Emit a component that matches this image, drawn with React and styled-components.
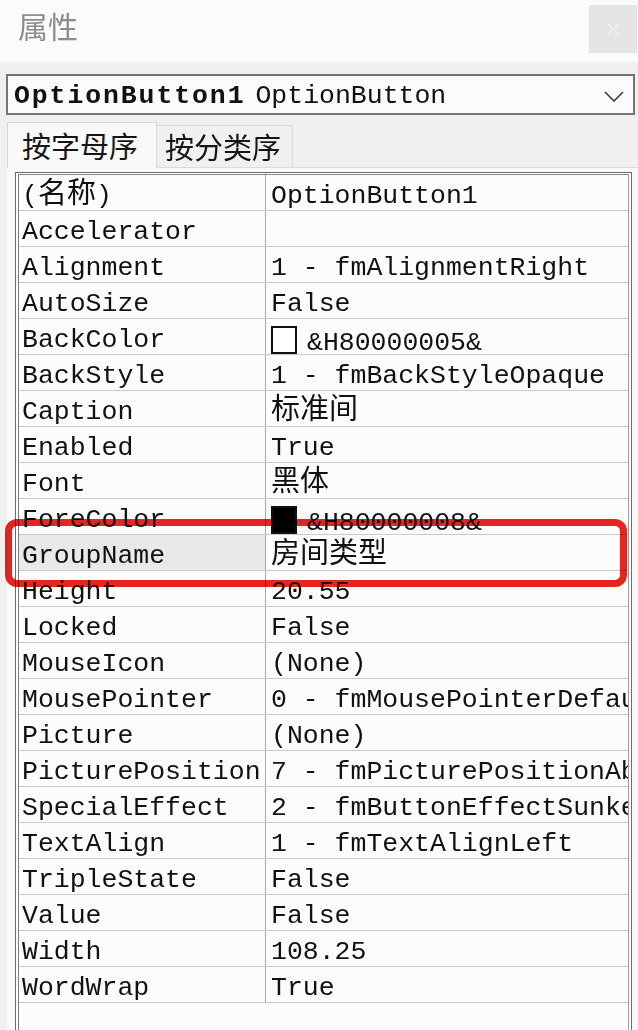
import React from "react";
import styled, { createGlobalStyle } from "styled-components";

const rows = [
  { name: "(名称)", value: "OptionButton1" },
  { name: "Accelerator", value: "" },
  { name: "Alignment", value: "1 - fmAlignmentRight" },
  { name: "AutoSize", value: "False" },
  { name: "BackColor", value: "&H80000005&", swatch: "#fff" },
  { name: "BackStyle", value: "1 - fmBackStyleOpaque" },
  { name: "Caption", value: "标准间", cjk: true },
  { name: "Enabled", value: "True" },
  { name: "Font", value: "黑体", cjk: true },
  { name: "ForeColor", value: "&H80000008&", swatch: "#000" },
  { name: "GroupName", value: "房间类型", cjk: true, selected: true },
  { name: "Height", value: "20.55" },
  { name: "Locked", value: "False" },
  { name: "MouseIcon", value: "(None)" },
  { name: "MousePointer", value: "0 - fmMousePointerDefault" },
  { name: "Picture", value: "(None)" },
  { name: "PicturePosition", value: "7 - fmPicturePositionAboveCenter" },
  { name: "SpecialEffect", value: "2 - fmButtonEffectSunken" },
  { name: "TextAlign", value: "1 - fmTextAlignLeft" },
  { name: "TripleState", value: "False" },
  { name: "Value", value: "False" },
  { name: "Width", value: "108.25" },
  { name: "WordWrap", value: "True" },
];

const App = () => {
  return (
    <Panel>
      <GlobalStyle />
      <TitleBar>
        <Title>属性</Title>
        <CloseButton>×</CloseButton>
      </TitleBar>
      <Body>
        <Dropdown>
          <ObjectName>OptionButton1</ObjectName>
          <ObjectType>OptionButton</ObjectType>
          <Chevron width="20" height="11" viewBox="0 0 20 11">
            <polyline points="1,1 10,10 19,1" fill="none" stroke="#3a3a3a" strokeWidth="1.6" />
          </Chevron>
        </Dropdown>
        <Tabs>
          <Tab $active>按字母序</Tab>
          <Tab>按分类序</Tab>
        </Tabs>
        <TabPage>
          <Frame>
            <Grid>
              {rows.map((row) => (
                <Row key={row.name}>
                  <NameCell $selected={row.selected}>
                    {row.name === "(名称)" ? (
                      <>
                        (<Cjk>名称</Cjk>)
                      </>
                    ) : (
                      row.name
                    )}
                  </NameCell>
                  <ValueCell>
                    {row.swatch && <Swatch $color={row.swatch} />}
                    {row.cjk ? <Cjk>{row.value}</Cjk> : row.value}
                  </ValueCell>
                </Row>
              ))}
            </Grid>
          </Frame>
        </TabPage>
      </Body>
      <Highlight />
    </Panel>
  );
};

export default App;

const GlobalStyle = createGlobalStyle`
  html, body {
    margin: 0;
    background: #f0f0f0;
  }
  body {
    font-family: "Liberation Mono", "Noto Sans CJK SC", monospace;
    color: #111;
  }
`;

const Panel = styled.div`
  position: relative;
  width: 638px;
  height: 1030px;
  overflow: hidden;
  background: #f0f0f0;
  display: flex;
  flex-direction: column;
`;

const TitleBar = styled.div`
  height: 62px;
  flex-shrink: 0;
  background: #fafbfd;
  display: flex;
  justify-content: space-between;
  align-items: flex-start;
`;

const Title = styled.div`
  padding: 10px 0 0 18px;
  font-family: "Noto Sans CJK SC", sans-serif;
  font-size: 30px;
  line-height: 30px;
  color: #8c8c8c;
`;

const CloseButton = styled.div`
  width: 48px;
  height: 48px;
  margin-top: 5px;
  margin-right: 1px;
  background: #e4e4e4;
  color: #ededed;
  font-family: "Liberation Sans", sans-serif;
  font-size: 30px;
  display: grid;
  place-content: center;
`;

const Body = styled.div`
  padding: 12px 3px 0 6px;
  display: flex;
  flex-direction: column;
`;

const Dropdown = styled.div`
  height: 41px;
  box-sizing: border-box;
  border: 2px solid #747474;
  background: #fbfbfd;
  display: flex;
  align-items: center;
  padding: 3px 0 0 6px;
  font-size: 26.5px;
  line-height: 30px;
`;

const ObjectName = styled.span`
  font-weight: bold;
  letter-spacing: 1.9px;
`;

const ObjectType = styled.span`
  margin-left: 10px;
`;

const Chevron = styled.svg`
  margin-left: auto;
  margin-right: 9px;
`;

const Tabs = styled.div`
  display: flex;
  align-items: flex-end;
  margin: 7px 0 0 1px;
  height: 45px;
`;

const Tab = styled.div`
  box-sizing: border-box;
  height: ${(p) => (p.$active ? "46px" : "42px")};
  width: ${(p) => (p.$active ? "150px" : "136px")};
  background: ${(p) => (p.$active ? "#f9f9f9" : "#f0f0f0")};
  border: 1px solid #d8d8d8;
  border-bottom: none;
  ${(p) => !p.$active && "border-left: none;"}
  font-family: "Noto Sans CJK SC", sans-serif;
  font-size: 29px;
  line-height: 36px;
  color: #151515;
  padding: ${(p) => (p.$active ? "4px 0 0 14px" : "2px 0 0 8px")};
  position: relative;
  z-index: ${(p) => (p.$active ? 1 : 0)};
  margin-bottom: ${(p) => (p.$active ? "-1px" : "0")};
`;

const TabPage = styled.div`
  margin-left: 1px;
  margin-right: -3px;
  border-top: 1px solid #dcdcdc;
  background: #f9f9f9;
  padding: 4px 6px 0 8px;
  height: 900px;
`;

const Frame = styled.div`
  border: 1px solid #6c6c6c;
  background: #fff;
  padding: 1px 2px 0 2px;
  height: 880px;
`;

const Grid = styled.div`
  border-top: 1px solid #8a8a8a;
  border-left: 1px solid #7c7c7c;
  border-right: 1px solid #9a9a9a;
  height: 100%;
  background: #fcfcfd;
`;

const Row = styled.div`
  display: grid;
  grid-template-columns: 247px 1fr;
  height: 36px;
  box-sizing: border-box;
  border-bottom: 1px solid #c8cacd;
  font-size: 26.5px;
`;

const NameCell = styled.div`
  box-sizing: border-box;
  border-right: 1px solid #a8a8a8;
  padding: 7px 0 0 3px;
  line-height: 29px;
  white-space: nowrap;
  overflow: hidden;
  background: ${(p) => (p.$selected ? "#e9e9ea" : "transparent")};
`;

const ValueCell = styled.div`
  box-sizing: border-box;
  padding: 7px 0 0 5px;
  line-height: 29px;
  white-space: nowrap;
  overflow: hidden;
`;

const Cjk = styled.span`
  display: inline-block;
  font-family: "Noto Sans CJK SC", sans-serif;
  font-size: 29px;
  height: 29px;
  line-height: 29px;
  vertical-align: top;
  margin-top: -6px;
`;

const Swatch = styled.span`
  display: inline-block;
  box-sizing: border-box;
  width: 26px;
  height: 28px;
  border: 2px solid #111;
  background: ${(p) => p.$color};
  vertical-align: -4px;
  margin-right: 10px;
`;

const Highlight = styled.div`
  position: absolute;
  left: 5px;
  top: 519px;
  width: 622px;
  height: 68px;
  box-sizing: border-box;
  border: 7px solid #ea2420;
  border-radius: 12px;
  mix-blend-mode: multiply;
  pointer-events: none;
`;
